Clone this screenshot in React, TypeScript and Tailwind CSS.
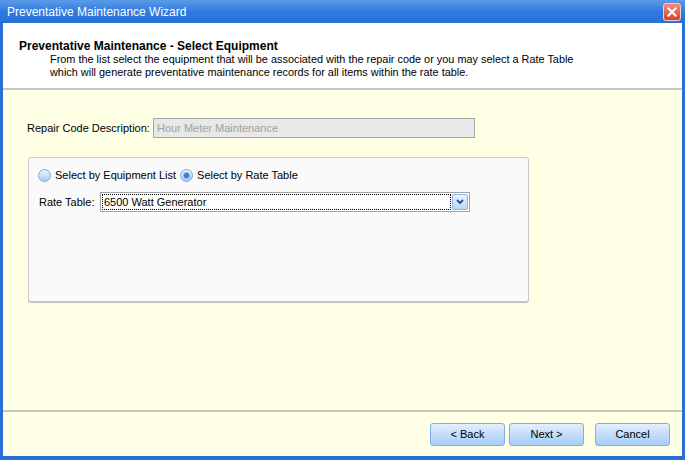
import React from "react";

const font = { fontFamily: '"Liberation Sans", Arial, sans-serif' };

function Radio({ checked }: { checked?: boolean }) {
  return (
    <span className="relative inline-block w-[13px] h-[13px] rounded-full border border-[#7ea6d6] bg-gradient-to-b from-[#e9f3fd] to-[#a9cdf3]">
      {checked && (
        <span className="absolute left-[3px] top-[3px] w-[5px] h-[5px] rounded-full bg-[#2f7be0] shadow-[0_0_0_1px_#8cbcf0]" />
      )}
    </span>
  );
}

function Btn({ children }: { children: React.ReactNode }) {
  return (
    <button className="w-[75px] h-[23px] rounded-[3px] border border-[#7eaee6] bg-gradient-to-b from-[#e3f0fe] via-[#c3ddfb] to-[#a6cdf7] text-[11px] text-black flex items-center justify-center">
      {children}
    </button>
  );
}

export default function App() {
  return (
    <div className="w-[685px] h-[460px] bg-[#2a6fd6] flex flex-col text-[11px] text-black" style={font}>
      {/* title bar */}
      <div className="h-[23px] shrink-0 flex items-center justify-between pl-[7px] pr-[4px] bg-gradient-to-b from-[#5b9ae8] via-[#2f7be0] to-[#2a6fd6]">
        <span className="text-white text-[12px]">Preventative Maintenance Wizard</span>
        <span className="w-[18px] h-[18px] rounded-[3px] border border-[#f5d0c8] bg-gradient-to-b from-[#f08a75] to-[#d8402a] flex items-center justify-center">
          <svg width="10" height="10" viewBox="0 0 10 10">
            <path d="M1.5 1.5 L8.5 8.5 M8.5 1.5 L1.5 8.5" stroke="white" strokeWidth="2.2" strokeLinecap="square" />
          </svg>
        </span>
      </div>
      {/* body */}
      <div className="flex-1 mx-[3px] mb-[4px] flex flex-col bg-[#ffffe6] overflow-hidden">
        <div className="h-[67px] shrink-0 bg-white border-b-2 border-[#c8c8c8] pt-[16px]">
          <div className="pl-[16px] font-bold text-[12px] leading-[14px]">Preventative Maintenance - Select Equipment</div>
          <div className="pl-[47px] leading-[13px] text-[10.9px]">
            From the list select the equipment that will be associated with the repair code or you may select a Rate Table
            <br />
            which will generate preventative maintenance records for all items within the rate table.
          </div>
        </div>
        <div className="flex-1 flex flex-col">
          <div className="flex items-center mt-[28px] pl-[24px] h-[20px]">
            <span className="w-[126px]">Repair Code Description:</span>
            <div className="w-[322px] h-[20px] bg-[#e8e8e8] border border-[#a5a5a5] text-[#a0a0a0] flex items-center pl-[3px]">
              Hour Meter Maintenance
            </div>
          </div>
          <div className="ml-[25px] mt-[19px] w-[501px] h-[145px] bg-[#fafafa] border border-[#c8c8c8] rounded-[3px] shadow-[0_1px_0_#bdbdbd]">
            <div className="flex items-center mt-[10px] ml-[9px] h-[14px]">
              <Radio />
              <span className="ml-[4px]">Select by Equipment List</span>
              <span className="ml-[4px] flex"><Radio checked /></span>
              <span className="ml-[4px]">Select by Rate Table</span>
            </div>
            <div className="flex items-center mt-[10px] ml-[10px]">
              <span className="w-[61px]">Rate Table:</span>
              <div className="w-[370px] h-[20px] border border-[#a5a5a5] bg-white flex items-center p-[1px]">
                <div className="flex-1 h-full border border-dotted border-black flex items-center pl-[1px]">6500 Watt Generator</div>
                <div className="w-[16px] h-[16px] ml-[1px] rounded-[2px] border border-[#8fb8e8] bg-gradient-to-b from-[#eaf4fe] to-[#b6d6f8] flex items-center justify-center">
                  <svg width="8" height="6" viewBox="0 0 8 6">
                    <path d="M1 1 L4 4 L7 1" stroke="#1f4f9a" strokeWidth="1.8" fill="none" />
                  </svg>
                </div>
              </div>
            </div>
          </div>
          <div className="flex-1" />
          <div className="border-t-2 border-[#c8c8c8] h-[46px] flex items-start pt-[11px] pl-[427px] gap-[4px]">
            <Btn>&lt; Back</Btn>
            <Btn>Next &gt;</Btn>
            <span className="ml-[7px]"><Btn>Cancel</Btn></span>
          </div>
        </div>
      </div>
    </div>
  );
}
